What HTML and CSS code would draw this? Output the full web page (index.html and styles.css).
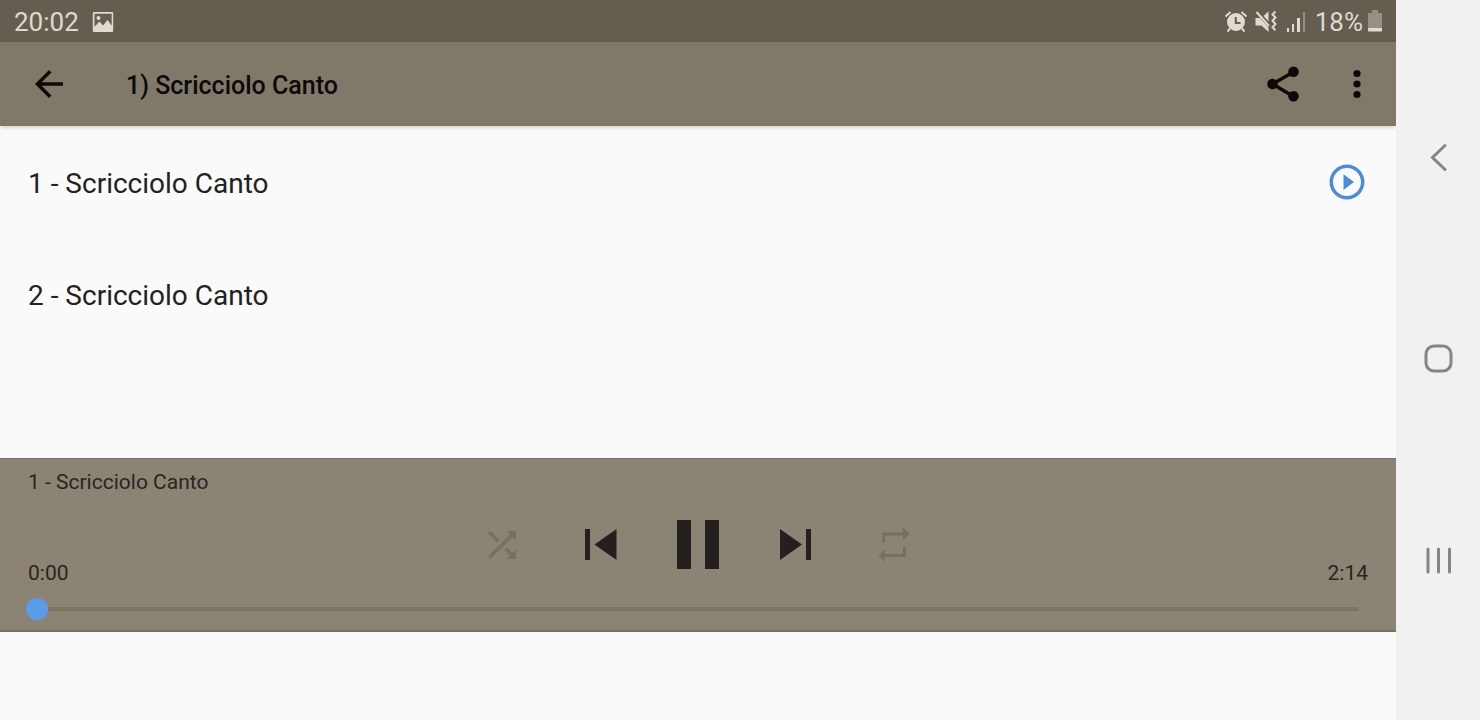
FILE: index.html
```
<!DOCTYPE html>
<html lang="it">
<head>
<meta charset="utf-8">
<meta name="viewport" content="width=device-width, initial-scale=1">
<title>Scricciolo Canto</title>
<link rel="stylesheet" href="styles.css">
</head>
<body>
<div class="device">
  <div class="app">
    <div class="status">
      <span class="status-text">20:02</span>
      <svg class="status-picture" width="22" height="22" viewBox="0 0 22 22"><path fill-rule="evenodd" d="M2 1h18q1.200 0 1.200 1.200v17.600q0 1.200-1.200 1.200h-18q-1.200 0-1.200-1.200v-17.600q0-1.200 1.200-1.200zM2.500 2.800v13l5-5.300 3.500 4 4.500-5.500 4.200 5.500v-11.700zM6.500 5a2 2 0 1 1 0 4 2 2 0 0 1 0-4z"/></svg>
      <span class="status-space"></span>
      <svg width="24" height="24" viewBox="0 0 24 24"><path fill-rule="evenodd" d="M12 3a9 9 0 1 1 0 18 9 9 0 0 1 0-18zM10.800 7v7h5.700v-2h-3.700v-5z"/><path class="status-line" d="M1.500 6.500l5-4.500M22.500 6.500l-5-4.500M6 18.500l-2.500 3M18 18.500l2.500 3"/></svg>
      <svg class="status-mute" width="24" height="24" viewBox="0 0 24 24"><path d="M1.500 8h4.500l8.500 9.500v4.500l-7-6.500h-6zM9.500 6l5-4.500v10z"/><path class="status-line" d="M2.500 2l12.500 14"/><path class="status-wave" d="M21.500 1.500l-3 3 3 3-3 3.200 3 3.300-3 3.200 3 3"/></svg>
      <svg class="status-signal" width="20" height="24" viewBox="0 0 20 24"><path d="M1 18h2v4h-2zM6 14h2v8h-2zM11 8h3v14h-3z"/><path opacity=".4" d="M17 2h2v20h-2z"/></svg>
      <span class="status-text">18%</span>
      <svg class="status-battery" width="14" height="24" viewBox="0 0 14 24"><path opacity=".4" d="M4 0h6v3h4v15h-14v-15h4z"/><path d="M0 18h14v2.500q0 1-1 1h-12q-1 0-1-1z"/></svg>
    </div>
    <header class="bar">
      <button class="icon-button" aria-label="Indietro"><svg width="42" height="42" viewBox="0 0 24 24"><path d="M20 11H7.830l5.590-5.590L12 4l-8 8 8 8 1.410-1.410L7.830 13H20z"/></svg></button>
      <h1 class="bar-title">1) Scricciolo Canto</h1>
      <button class="icon-button" aria-label="Condividi"><svg width="42" height="42" viewBox="0 0 42 42"><path class="share-line" d="M31.500 9L10.500 21l21 12.500"/><circle cx="31.500" cy="8.800" r="5.300"/><circle cx="10.500" cy="21" r="5.300"/><circle cx="31.500" cy="33.300" r="5.300"/></svg></button>
      <button class="icon-button" aria-label="Altre opzioni"><svg width="42" height="42" viewBox="0 0 42 42"><circle cx="21" cy="10.500" r="3.600"/><circle cx="21" cy="21" r="3.600"/><circle cx="21" cy="31.500" r="3.600"/></svg></button>
    </header>
    <ul class="tracks">
      <li class="track">
        <span class="track-name">1 - Scricciolo Canto</span>
        <button class="track-play" aria-label="Riproduci"><svg width="42" height="42" viewBox="0 0 24 24"><path d="M10 16.500l6-4.500-6-4.500v9zM12 2C6.480 2 2 6.480 2 12s4.480 10 10 10 10-4.480 10-10S17.520 2 12 2zm0 18c-4.410 0-8-3.590-8-8s3.590-8 8-8 8 3.590 8 8-3.590 8-8 8z"/></svg></button>
      </li>
      <li class="track"><span class="track-name">2 - Scricciolo Canto</span></li>
    </ul>
    <section class="player" aria-label="Lettore">
      <div class="player-title">1 - Scricciolo Canto</div>
      <div class="player-row">
        <span class="time">0:00</span>
        <div class="controls">
          <button class="control control-off" aria-label="Casuale"><svg width="42" height="42" viewBox="0 0 24 24"><path d="M10.590 9.170L5.410 4 4 5.410l5.170 5.170 1.420-1.410zM14.500 4l2.040 2.040L4 18.590 5.410 20 17.960 7.460 20 9.500V4h-5.500zm.33 9.410l-1.410 1.410 3.130 3.130L14.500 20H20v-5.500l-2.040 2.040-3.130-3.130z"/></svg></button>
          <button class="control" aria-label="Precedente"><svg width="42" height="42" viewBox="0 0 42 42"><path d="M6 5h5v31h-5zM37.500 5v31l-22-15.500z"/></svg></button>
          <button class="control" aria-label="Pausa"><svg width="42" height="50" viewBox="0 0 42 50"><path d="M0 0h14v49h-14zM28 0h14v49h-14z"/></svg></button>
          <button class="control" aria-label="Successivo"><svg width="42" height="42" viewBox="0 0 42 42"><path d="M5 5v31l22-15.500zM31 5h5v31h-5z"/></svg></button>
          <button class="control control-off" aria-label="Ripeti"><svg width="42" height="42" viewBox="0 0 42 42"><path d="M9 8.500h21v-5l6.500 6.500-6.500 6.500v-5h-18v7h-3zM33 33h-21v5l-6.500-6.500 6.500-6.500v5h18v-7h3z"/></svg></button>
        </div>
        <span class="time time-end">2:14</span>
      </div>
      <input class="seek" type="range" min="0" max="134" value="0" aria-label="Posizione">
    </section>
    <div class="banner"></div>
  </div>
  <nav class="system" aria-label="Sistema">
    <button class="system-button" aria-label="Indietro"><svg width="42" height="42" viewBox="0 0 42 42"><path d="M28 8.500L15.500 20.500 28 32.500"/></svg></button>
    <button class="system-button" aria-label="Home"><svg width="42" height="42" viewBox="0 0 42 42"><rect x="9" y="8" width="25" height="25" rx="8"/></svg></button>
    <button class="system-button" aria-label="Recenti"><svg width="42" height="42" viewBox="0 0 42 42"><path d="M11 10v23M21.500 10v23M32.500 10v23"/></svg></button>
  </nav>
</div>
</body>
</html>
```
FILE: styles.css
```
* {
  box-sizing: border-box;
}

body {
  margin: 0;
  font-family: Roboto, "Liberation Sans", sans-serif;
  color: #222;
}

button {
  display: flex;
  align-items: center;
  justify-content: center;
  padding: 0;
  border: 0;
  background: none;
  color: inherit;
}

svg {
  display: block;
  flex: none;
  fill: currentColor;
}

.device {
  display: flex;
  min-height: 100vh;
  background: #fafafa;
}

.app {
  flex: 1;
  display: flex;
  flex-direction: column;
}

.status {
  display: flex;
  align-items: center;
  height: 42px;
  padding: 2px 14px 0;
  background: #655e50;
  color: #dedad2;
}

.status-text {
  font-size: 26px;
  line-height: 40px;
}

.status-picture {
  margin-left: 13px;
}

.status-space {
  flex: 1;
}

.status-line {
  fill: none;
  stroke: currentColor;
  stroke-width: 2;
}

.status-wave {
  fill: none;
  stroke: currentColor;
  stroke-width: 2;
}

.status-mute {
  margin-left: 6px;
}

.status-signal {
  margin: 0 9px 0 8px;
}

.status-battery {
  margin-left: 5px;
}

.bar {
  display: flex;
  align-items: center;
  height: 84px;
  padding: 0 0 0 14px;
  background: #807868;
  color: #0c0a08;
  box-shadow: 0 3px 3px -1px rgba(0, 0, 0, 0.15);
}

.icon-button {
  width: 70px;
  height: 84px;
  margin-right: 4px;
}

.share-line {
  fill: none;
  stroke: currentColor;
  stroke-width: 3.5;
}

.bar-title {
  flex: 1;
  margin: 0 0 0 38px;
  padding-top: 4px;
  font-size: 25px;
  font-weight: 500;
  line-height: 32px;
}

.tracks {
  flex: 1;
  margin: 0;
  padding: 0;
  list-style: none;
  font-size: 28px;
}

.track {
  display: flex;
  align-items: center;
  justify-content: space-between;
  height: 112px;
  padding: 0 28px;
}

.track-name {
  padding-top: 2px;
}

.track-play {
  color: #4b8cd8;
}

.player {
  border-top: 1px solid #787060;
  border-bottom: 2px solid #787060;
  background: #8b8373;
  color: #2a2520;
  font-size: 21px;
}

.player-title {
  padding: 0 28px;
  line-height: 46px;
}

.player-row {
  display: grid;
  grid-template-columns: 1fr auto 1fr;
  align-items: end;
  padding: 0 28px;
}

.time {
  line-height: 20px;
}

.time-end {
  text-align: right;
}

.controls {
  display: flex;
  color: #24201f;
}

.control {
  width: 98px;
  height: 78px;
  padding-top: 1px;
}

.control-off {
  color: #776f60;
}

.seek {
  display: block;
  width: calc(100% - 52px);
  height: 42px;
  margin: 5px 26px 0;
  appearance: none;
  background: linear-gradient(#7b7363, #7b7363) center / calc(100% - 22px) 4px no-repeat;
}

.seek::-webkit-slider-thumb {
  appearance: none;
  width: 22px;
  height: 22px;
  border-radius: 50%;
  background: #5a9bea;
}

.banner {
  height: 88px;
}

.system {
  display: flex;
  flex-direction: column;
  width: 84px;
  padding: 57px 0 59px;
  background: #f1f1f1;
  color: #858585;
}

.system-button {
  flex: 1;
}

.system svg {
  fill: none;
  stroke: currentColor;
  stroke-width: 3;
  stroke-linecap: round;
}
```
